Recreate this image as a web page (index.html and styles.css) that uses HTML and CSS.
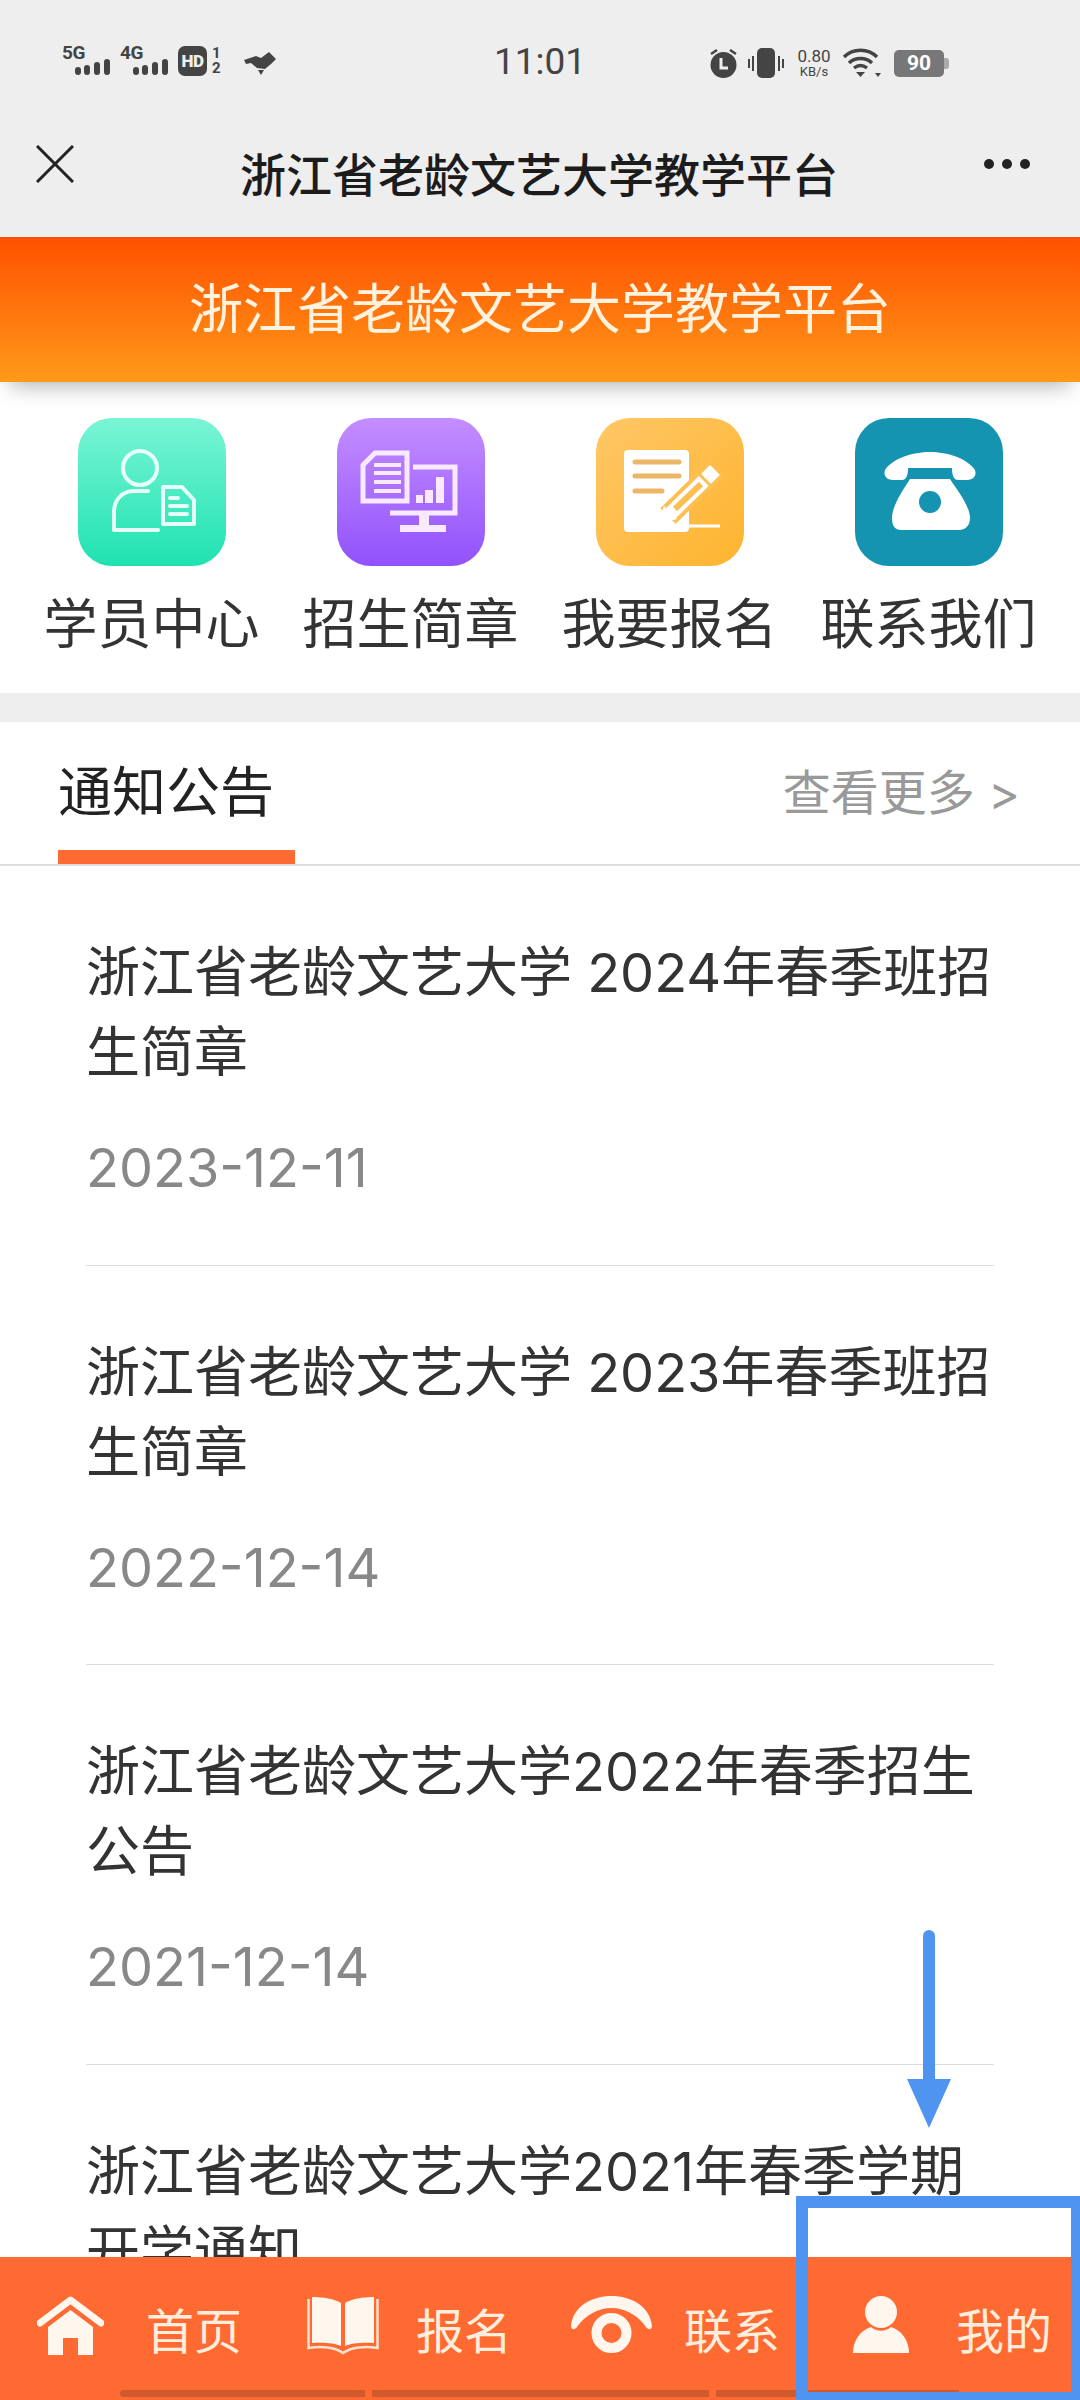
FILE: index.html
```html
<!DOCTYPE html>
<html lang="zh-CN">
<head>
    <meta charset="UTF-8">
    <meta name="viewport" content="width=device-width, initial-scale=1.0">
    <title>浙江省老龄文艺大学教学平台</title>
    <link rel="stylesheet" href="styles.css">
</head>
<body>
    <div class="status-bar">
        <div class="status-left">
            <div class="signal">
                <span class="net">5G</span>
                <svg class="bars" width="35" height="16" viewBox="0 0 35 16"><g fill="#444"><rect x="0" y="8" width="6" height="8" rx="3"/><rect x="9" y="6" width="6" height="10" rx="3"/><rect x="19" y="3" width="6" height="13" rx="3"/><rect x="29" y="0" width="6" height="16" rx="3"/></g></svg>
            </div>
            <div class="signal">
                <span class="net">4G</span>
                <svg class="bars" width="35" height="16" viewBox="0 0 35 16"><g fill="#444"><rect x="0" y="8" width="6" height="8" rx="3"/><rect x="9" y="6" width="6" height="10" rx="3"/><rect x="19" y="3" width="6" height="13" rx="3"/><rect x="29" y="0" width="6" height="16" rx="3"/></g></svg>
            </div>
            <span class="hd">HD</span>
            <div class="sim"><span>1</span><span>2</span></div>
            <svg class="shake" width="32" height="24" viewBox="0 0 32 24"><path d="M0 9 L12 5 L17 7 L25 1 L32 8 L27 13 L21 18 L13 17 L7 12 L2 13Z M14 19 H20 L17 24Z" fill="#444"/></svg>
        </div>
        <div class="clock">11:01</div>
        <div class="status-right">
            <svg width="29" height="29" viewBox="0 0 29 29"><path d="M2 5 L8 1 M27 5 L21 1" stroke="#444" stroke-width="2.5"/><circle cx="14.5" cy="16" r="13" fill="#444"/><path d="M12 9 V19 H19" fill="none" stroke="#eee" stroke-width="3"/></svg>
            <svg class="vibrate" width="36" height="30" viewBox="0 0 36 30"><rect x="9" y="0" width="18" height="30" rx="5" fill="#444"/><path d="M1 11 V20 M5 8 V23 M31 8 V23 M35 11 V20" stroke="#444" stroke-width="2"/></svg>
            <div class="speed"><span class="speed-num">0.80</span><span class="speed-unit">KB/s</span></div>
            <svg class="wifi" width="38" height="30" viewBox="0 0 38 30"><path d="M1 9 C10 0 25 0 34 9 M6 15 C12 9 23 9 29 15 M11 20 C15 17 20 17 24 20" fill="none" stroke="#444" stroke-width="3.4"/><path d="M13 24 H22 L17.5 29Z M32 25 H38 L35 29Z" fill="#444"/></svg>
            <div class="battery"><span class="battery-num">90</span></div>
        </div>
    </div>

    <div class="nav">
        <svg class="nav-close" width="38" height="38" viewBox="0 0 38 38"><path d="M1 1 L37 37 M37 1 L1 37" stroke="#222" stroke-width="3"/></svg>
        <div class="nav-title">浙江省老龄文艺大学教学平台</div>
        <div class="nav-more"><i></i><i></i><i></i></div>
    </div>

    <div class="banner">浙江省老龄文艺大学教学平台</div>

    <div class="menu">
        <div class="menu-item">
            <svg class="menu-icon" viewBox="0 0 148 148">
                <defs><linearGradient id="g1" x1="0" y1="0" x2="0" y2="1"><stop offset="0" stop-color="#7af5d6"/><stop offset="1" stop-color="#1fe2b0"/></linearGradient></defs>
                <rect width="148" height="148" rx="34" fill="url(#g1)"/>
                <g fill="none" stroke="#e6fff8" stroke-width="4" stroke-linecap="round" stroke-linejoin="round">
                    <circle cx="62" cy="50" r="17"/>
                    <path d="M70 73 H56 C44 73 36 82 36 94 V112 H80"/>
                    <path d="M85 69 H104 L116 82 V106 H85Z"/>
                    <path d="M92 80 H100 M92 88 H109 M92 96 H109"/>
                </g>
            </svg>
            <span>学员中心</span>
        </div>
        <div class="menu-item">
            <svg class="menu-icon" viewBox="0 0 148 148">
                <defs><linearGradient id="g2" x1="0" y1="0" x2="0" y2="1"><stop offset="0" stop-color="#c48dff"/><stop offset="1" stop-color="#9152fb"/></linearGradient></defs>
                <rect width="148" height="148" rx="34" fill="url(#g2)"/>
                <g fill="none" stroke="#f8e9ff">
                    <path d="M38 35 H70 V83 H26 V47Z" stroke-width="5"/>
                    <path d="M37 47 H64 M37 55 H64 M37 64 H64 M37 73 H64" stroke-width="4"/>
                    <path d="M76 49 H118 V95 H53" stroke-width="5"/>
                </g>
                <g fill="#f8e9ff">
                    <rect x="79" y="77" width="7" height="8"/>
                    <rect x="88" y="72" width="8" height="13"/>
                    <rect x="99" y="59" width="8" height="26"/>
                    <rect x="82" y="95" width="10" height="13"/>
                    <rect x="63" y="107" width="46" height="7"/>
                </g>
            </svg>
            <span>招生简章</span>
        </div>
        <div class="menu-item">
            <svg class="menu-icon" viewBox="0 0 148 148">
                <defs><linearGradient id="g3" x1="0" y1="0" x2="1" y2="1"><stop offset="0" stop-color="#ffc767"/><stop offset="1" stop-color="#feb42e"/></linearGradient></defs>
                <rect width="148" height="148" rx="34" fill="url(#g3)"/>
                <rect x="28" y="32" width="65" height="82" rx="4" fill="#fff"/>
                <path d="M39 44 H83 M39 58 H83 M39 73 H66" stroke="#edb667" stroke-width="5" stroke-linecap="round"/>
                <path d="M120 51 L72 98" stroke="#fdbf52" stroke-width="22"/>
                <path d="M119 52 L74 96" stroke="#fff" stroke-width="14"/>
                <path d="M105 66 L79 91" stroke="#fdbf52" stroke-width="6"/>
                <path d="M102 55 L116 69" stroke="#fdbf52" stroke-width="3"/>
                <path d="M68 88 L81 101 L62 106Z" fill="#fff"/>
                <path d="M62 108 H124" stroke="#fff" stroke-width="3"/>
            </svg>
            <span>我要报名</span>
        </div>
        <div class="menu-item">
            <svg class="menu-icon" viewBox="0 0 148 148">
                <rect width="148" height="148" rx="34" fill="#1494b0"/>
                <path d="M30 52 C38 40 58 34 75 34 C92 34 112 40 120 52 C122 58 118 62 112 62 H103 C99 62 97 58 97 50 H53 C53 58 51 62 47 62 H38 C32 62 28 58 30 52Z" fill="#fff"/>
                <path d="M55 61 H95 C102 72 115 88 115 100 C115 108 110 112 104 112 H46 C40 112 37 108 37 100 C37 88 48 72 55 61Z" fill="#fff"/>
                <circle cx="75" cy="84" r="11" fill="#1494b0"/>
            </svg>
            <span>联系我们</span>
        </div>
    </div>

    <div class="notice">
        <div class="notice-head">
            <div class="notice-tab">通知公告</div>
            <div class="notice-more">查看更多 &gt;</div>
        </div>
        <div class="notice-list">
            <div class="notice-item">
                <div class="notice-title">浙江省老龄文艺大学 2024年春季班招生简章</div>
                <div class="notice-date">2023-12-11</div>
            </div>
            <div class="notice-item">
                <div class="notice-title">浙江省老龄文艺大学 2023年春季班招生简章</div>
                <div class="notice-date">2022-12-14</div>
            </div>
            <div class="notice-item">
                <div class="notice-title">浙江省老龄文艺大学2022年春季招生公告</div>
                <div class="notice-date">2021-12-14</div>
            </div>
            <div class="notice-item">
                <div class="notice-title">浙江省老龄文艺大学2021年春季学期开学通知</div>
            </div>
        </div>
    </div>

    <div class="tabbar">
        <div class="tab tab-home">
            <svg width="67" height="59" viewBox="0 0 67 59"><path d="M3 27 L33.500 4 L64 27" fill="none" stroke="#fff6ee" stroke-width="7" stroke-linecap="round" stroke-linejoin="round"/><path d="M33.500 14 L56 31 V59 H41 V42 H26 V59 H11 V31Z" fill="#fff6ee"/></svg>
            <span>首页</span>
        </div>
        <div class="tab tab-book">
            <svg width="72" height="59" viewBox="0 0 72 59"><path d="M5 1 C16 1 28 3 34 7 V50 C28 47 16 46 5 47Z M67 1 C56 1 44 3 38 7 V50 C44 47 56 46 67 47Z" fill="#fff6ee"/><path d="M1.500 3 V52 C14 50 28 51 36 57 C44 51 58 50 70.500 52 V3" fill="none" stroke="#ffe2cf" stroke-width="2.500"/></svg>
            <span>报名</span>
        </div>
        <div class="tab tab-contact">
            <svg width="83" height="57" viewBox="0 0 83 57"><path d="M1 30 C3 10 22 0 41.500 0 C61 0 80 10 82 30 C82 34 78 34 76 31 C68 19 54 12 41.500 12 C29 12 15 19 7 31 C5 34 1 34 1 30Z" fill="#fff6ee"/><circle cx="41.500" cy="37" r="15" fill="none" stroke="#fff6ee" stroke-width="10"/></svg>
            <span>联系</span>
        </div>
        <div class="tab tab-mine">
            <svg width="56" height="57" viewBox="0 0 56 57"><circle cx="28" cy="16" r="16" fill="#fff6ee"/><path d="M0 57 C0 44 8 34 18 31 C24 36 32 36 38 31 C48 34 56 44 56 57Z" fill="#fff6ee"/></svg>
            <span>我的</span>
        </div>
        <div class="gesture">
            <i class="seg-a"></i><i class="seg-b"></i><i class="seg-c"></i>
        </div>
    </div>

    <div class="mark-box"></div>
    <svg class="mark-arrow" width="44" height="198" viewBox="0 0 44 198">
        <path d="M22 6 V152" stroke="#4f94ee" stroke-width="12" stroke-linecap="round"/>
        <path d="M0 149 H44 L22 198Z" fill="#4f94ee"/>
    </svg>
</body>
</html>
```

FILE: styles.css
```css
html, body {
    margin: 0;
    padding: 0;
}

body {
    position: relative;
    width: 1080px;
    height: 2400px;
    overflow: hidden;
    display: flex;
    flex-direction: column;
    background: #fff;
    font-family: "Noto Sans CJK SC", "Noto Sans", sans-serif;
    color: #333;
}

/* status bar */
.status-bar {
    height: 95px;
    flex: none;
    box-sizing: border-box;
    padding: 29px 136px 0 62px;
    display: grid;
    grid-template-columns: 432px 1fr auto;
    align-items: start;
    background: #eeeeef;
    color: #444;
}

.status-left {
    display: flex;
    align-items: flex-start;
}

.signal {
    width: 58px;
    height: 47px;
    position: relative;
}

.net {
    display: block;
    font-family: "Roboto", sans-serif;
    font-weight: 700;
    font-size: 19px;
    line-height: 20px;
    margin-top: 14px;
    letter-spacing: -0.5px;
}

.bars {
    position: absolute;
    left: 13px;
    top: 30px;
}

.hd {
    margin-top: 17px;
    width: 29px;
    height: 30px;
    border-radius: 7px;
    background: #444;
    color: #eee;
    font-family: "Roboto", sans-serif;
    font-weight: 900;
    font-size: 17px;
    line-height: 30px;
    text-align: center;
    letter-spacing: -0.5px;
}

.sim {
    display: flex;
    flex-direction: column;
    margin: 17px 0 0 5px;
    font-family: "Roboto", sans-serif;
    font-weight: 700;
    font-size: 15px;
    line-height: 15px;
}

.shake {
    margin: 22px 0 0 23px;
    flex: none;
}

.clock {
    font-family: "Roboto", sans-serif;
    font-size: 37px;
    line-height: 44px;
    margin-top: 11px;
    color: #444;
}

.status-right {
    display: flex;
    align-items: center;
    margin-top: 18px;
    height: 32px;
}

.vibrate {
    margin-left: 10px;
}

.speed {
    display: flex;
    flex-direction: column;
    align-items: center;
    margin-left: 11px;
    width: 38px;
    font-family: "Roboto", sans-serif;
    color: #444;
}

.speed-num {
    font-size: 17px;
    line-height: 17px;
}

.speed-unit {
    font-size: 13px;
    line-height: 14px;
}

.wifi {
    margin-left: 10px;
}

.battery {
    margin-left: 13px;
    width: 50px;
    height: 27px;
    border-radius: 5px;
    background: #777;
    position: relative;
    text-align: center;
}

.battery:after {
    content: "";
    position: absolute;
    right: -5px;
    top: 8px;
    width: 5px;
    height: 11px;
    border-radius: 0 3px 3px 0;
    background: #aaa;
}

.battery-num {
    color: #fff;
    font-family: "Roboto", sans-serif;
    font-weight: 700;
    font-size: 21px;
    line-height: 27px;
}

/* title bar */
.nav {
    height: 142px;
    flex: none;
    display: flex;
    align-items: center;
    justify-content: space-between;
    box-sizing: border-box;
    padding: 0 50px 4px 36px;
    background: #eeeeef;
}

.nav-title {
    font-size: 46px;
    font-weight: 500;
    color: #1c1c1c;
    line-height: 60px;
    margin: 16px 0 0 20px;
}

.nav-more {
    display: flex;
    gap: 8px;
}

.nav-more i {
    display: block;
    width: 10px;
    height: 10px;
    border-radius: 50%;
    background: #222;
}

/* banner */
.banner {
    height: 145px;
    flex: none;
    position: relative;
    z-index: 1;
    box-sizing: border-box;
    padding-bottom: 8px;
    display: flex;
    align-items: center;
    justify-content: center;
    background: linear-gradient(180deg, #ff5000 0%, #ff9a1a 100%);
    box-shadow: 0 14px 20px -10px rgba(0,0,0,0.3);
    color: #fff3e0;
    font-size: 54px;
    line-height: 70px;
}

/* four entries */
.menu {
    height: 311px;
    flex: none;
    box-sizing: border-box;
    padding: 36px 22px 0;
    display: grid;
    grid-template-columns: repeat(4, 259px);
    background: #fff;
}

.menu-item {
    display: flex;
    flex-direction: column;
    align-items: center;
    font-size: 54px;
    line-height: 70px;
    color: #333;
    white-space: nowrap;
}

.menu-icon {
    display: block;
    width: 148px;
    height: 148px;
    margin-bottom: 20px;
}

/* notices */
.notice {
    flex: 1;
    min-height: 0;
    overflow: hidden;
    margin-top: 29px;
    background: #fff;
    position: relative;
    box-shadow: 0 -29px 0 #eeeeef;
    font-family: "Inter", "Noto Sans CJK SC", sans-serif;
}

.notice-head {
    height: 144px;
    box-sizing: border-box;
    padding: 0 60px 0 58px;
    display: flex;
    justify-content: space-between;
    border-bottom: 2px solid #dddddd;
}

.notice-tab {
    width: 237px;
    height: 142px;
    box-sizing: border-box;
    border-bottom: 14px solid #ff6a32;
    padding-top: 35px;
    font-size: 54px;
    line-height: 72px;
    color: #222;
}

.notice-more {
    padding-top: 40px;
    font-size: 48px;
    line-height: 62px;
    color: #999;
}

.notice-list {
    padding: 0 86px;
}

.notice-item {
    padding: 67px 0 56.500px;
    border-bottom: 1.500px solid #dcdcdc;
}

.notice-title {
    font-size: 54px;
    line-height: 80px;
    color: #333;
}

.notice-date {
    margin-top: 35px;
    font-size: 54px;
    line-height: 80px;
    color: #888;
}

/* bottom tabs */
.tabbar {
    height: 143px;
    flex: none;
    position: relative;
    display: flex;
    background: #ff6a32;
    color: #ffeede;
}

.tab {
    height: 100px;
    box-sizing: border-box;
    padding-top: 39px;
    display: flex;
    font-size: 48px;
    line-height: 70px;
}

.tab svg {
    flex: none;
}

.tab span {
    margin-top: -3px;
}

.tab-home {
    width: 270px;
    padding-left: 37px;
    gap: 42px;
}

.tab-book {
    width: 263px;
    padding-left: 37px;
    gap: 37px;
}

.tab-contact {
    width: 283px;
    padding-left: 37px;
    gap: 31px;
}

.tab-mine {
    flex: 1;
    padding-left: 37px;
    gap: 47px;
}

.gesture {
    position: absolute;
    left: 120px;
    top: 133px;
    display: flex;
    gap: 7px;
}

.gesture i {
    display: block;
    height: 7px;
    background: #cf5a2c;
}

.seg-a {
    width: 245px;
    border-radius: 4px 0 0 4px;
}

.seg-b {
    width: 337px;
}

.seg-c {
    width: 243px;
}

/* blue annotation over the page */
.mark-box {
    position: absolute;
    left: 796px;
    top: 2196px;
    width: 284px;
    height: 204px;
    box-sizing: border-box;
    border: 12px solid #4f94ee;
    border-width: 12px 9px 8px 12px;
}

.mark-arrow {
    position: absolute;
    left: 907px;
    top: 1930px;
}
```
